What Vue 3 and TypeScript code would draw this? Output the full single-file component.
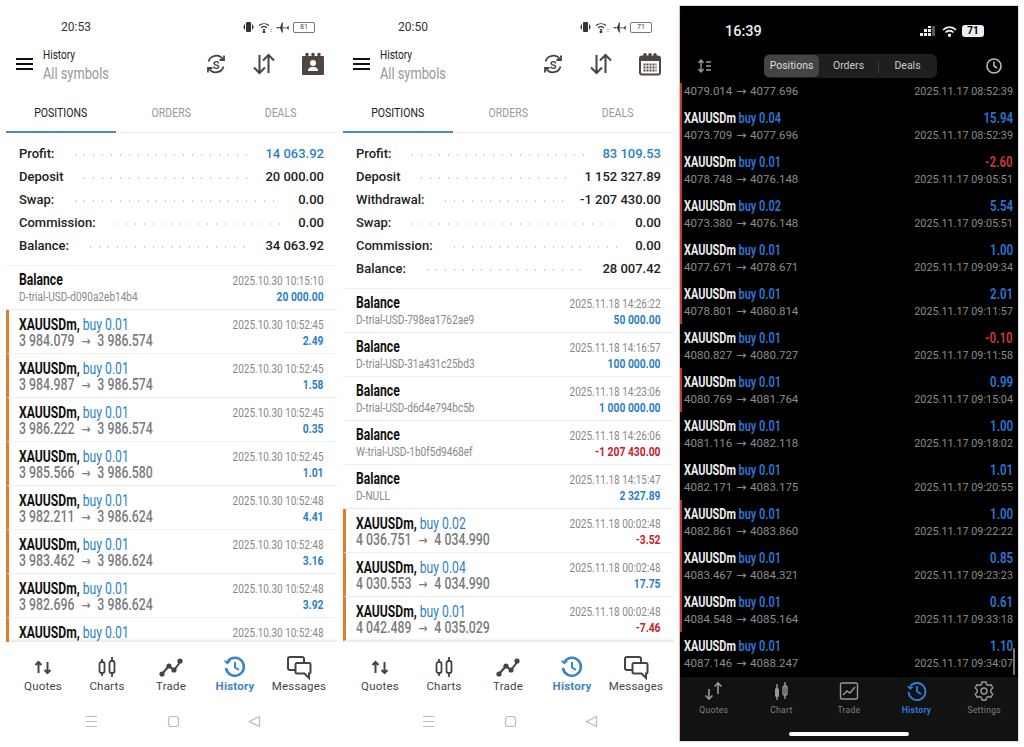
<template>
  <div class="page">
    <section v-for="p in phones" :key="p.time" class="phone">
      <div class="status">
        <span class="clock">{{ p.time }}</span>
        <div class="status-icons">
          <svg width="11" height="12" viewBox="0 0 11 12"><rect x="3" y="1" width="5" height="10" rx="1" fill="#333" /><path d="M1.5 3.5v5M9.5 3.5v5M0 5v2M11 5v2" stroke="#333" /></svg>
          <svg width="14" height="11" viewBox="0 0 14 11" fill="none" stroke="#333" stroke-width="1.2"><path d="M1 3.5a8 8 0 0 1 10 0M3 5.8a5 5 0 0 1 6 0M4.8 8a2.2 2.2 0 0 1 2.4 0" /><circle cx="6" cy="10" r=".8" fill="#333" /><path d="M13 7v.5M13 9v.5" /></svg>
          <svg width="13" height="11" viewBox="0 0 13 11"><path d="M0 5.5l2-.5 2 .5 2-5h1l-.5 5H11l1-1.5h1L12.500 5.500 13 7.500h-1L11 6.300H6.500L7 10.500H6L4 6 2 6.500z" fill="#333" /></svg>
          <span class="battery">{{ p.battery }}</span>
        </div>
      </div>

      <header class="toolbar">
        <div class="burger"><i></i><i></i><i></i></div>
        <div class="titles">
          <div class="title">History</div>
          <div class="subtitle">All symbols</div>
        </div>
        <div class="tools">
          <svg width="22" height="22" viewBox="0 0 22 22" fill="none" stroke="#444" stroke-width="1.800">
            <path d="M3.500 8.500A8 8 0 0 1 18 6.500M18.500 13.500A8 8 0 0 1 4 15.500" />
            <path d="M19 2.500v4.500h-4.500M3 19.500V15h4.500" />
            <text x="11" y="15.500" text-anchor="middle" class="dollar">S</text>
          </svg>
          <svg width="24" height="24" viewBox="0 0 24 24" fill="none" stroke="#444" stroke-width="2">
            <path d="M7.500 3v18M2 15.500l5.500 5.500 5.500-5.500M16.500 21V3M11 8.500L16.500 3 22 8.500" />
          </svg>
          <svg v-if="p.person" width="24" height="24" viewBox="0 0 24 24">
            <rect x="1" y="4" width="22" height="19" rx="1" fill="#50463f" />
            <circle cx="6" cy="2.500" r="1.800" fill="#50463f" /><circle cx="12" cy="2.500" r="1.800" fill="#50463f" /><circle cx="18" cy="2.500" r="1.800" fill="#50463f" />
            <circle cx="12" cy="11" r="3" fill="#fff" /><path d="M7 19c0-3 2-4 5-4s5 1 5 4z" fill="#fff" />
          </svg>
          <svg v-else width="24" height="24" viewBox="0 0 24 24">
            <rect x="2" y="4.500" width="20" height="18" rx="2" fill="none" stroke="#50463f" stroke-width="2" />
            <rect x="2" y="4" width="20" height="5" fill="#50463f" />
            <circle cx="7" cy="2.800" r="1.800" fill="#50463f" /><circle cx="12" cy="2.800" r="1.800" fill="#50463f" /><circle cx="17" cy="2.800" r="1.800" fill="#50463f" />
            <path d="M5.500 12.500h13M5.500 15.500h13M5.500 18.500h13" stroke="#50463f" stroke-width="1.800" stroke-dasharray="2 1" />
          </svg>
        </div>
      </header>

      <nav class="tabs">
        <div class="tab active"><span>POSITIONS</span></div>
        <div class="tab"><span>ORDERS</span></div>
        <div class="tab"><span>DEALS</span></div>
      </nav>

      <div class="summary">
        <div v-for="s in p.summary" :key="s.label" class="sum-row">
          <span>{{ s.label }}</span>
          <i class="leader"></i>
          <span :class="{ blue: s.blue }">{{ s.value }}</span>
        </div>
      </div>

      <div class="list">
        <div v-for="(b, i) in p.balances" :key="i" class="row">
          <div class="row-l">
            <div class="sym">Balance</div>
            <div class="acct">{{ b.acct }}</div>
          </div>
          <div class="row-r">
            <div class="date">{{ b.date }}</div>
            <div class="amt" :class="{ neg: b.amt.startsWith('-') }">{{ b.amt }}</div>
          </div>
        </div>
        <div v-for="(t, i) in p.trades" :key="i" class="row trade">
          <div class="row-l">
            <div class="sym">XAUUSDm, <em>buy {{ t.vol }}</em></div>
            <div class="prices">{{ t.open }} <small>→</small> {{ t.close }}</div>
          </div>
          <div class="row-r">
            <div class="date">{{ t.date }}</div>
            <div class="amt" :class="{ neg: t.amt.startsWith('-') }">{{ t.amt }}</div>
          </div>
        </div>
      </div>

      <footer class="bottom">
        <div v-for="n in lightNav" :key="n.label" class="nav-item" :class="{ on: n.label === 'History' }">
          <svg width="26" height="26" viewBox="0 0 26 26" fill="none" v-html="n.icon"></svg>
          <span>{{ n.label }}</span>
        </div>
      </footer>
      <div class="softkeys">
        <svg width="13" height="13" viewBox="0 0 13 13" stroke="#bbb" stroke-width="1.200"><path d="M1 1.500h11M1 6.500h11M1 11.500h11" /></svg>
        <svg width="13" height="13" viewBox="0 0 13 13" fill="none" stroke="#bbb" stroke-width="1.200"><rect x="1.500" y="1.500" width="10" height="10" rx="2.500" /></svg>
        <svg width="13" height="13" viewBox="0 0 13 13" fill="none" stroke="#bbb" stroke-width="1.200"><path d="M11.500 1.500v10L1.500 6.500z" /></svg>
      </div>
    </section>

    <section class="ios">
      <div class="ios-status">
        <span class="ios-clock">16:39</span>
        <div class="ios-icons">
          <svg width="17" height="11" viewBox="0 0 17 11" fill="#eee"><path d="M0 7h3v3H0zM4 7h3v3H4zM8 7h3v3H8zM4 3h3v3H4zM8 3h3v3H8zM8 0h3v2H8z" /><path d="M12 0h3v10h-3z" fill="#555" /></svg>
          <svg width="15" height="11" viewBox="0 0 15 11" fill="none" stroke="#eee" stroke-width="1.800"><path d="M1 4a9 9 0 0 1 13 0M3.500 6.500a5.500 5.500 0 0 1 8 0" /><circle cx="7.500" cy="9.200" r=".8" fill="#eee" /></svg>
          <span class="ios-batt">71</span>
        </div>
      </div>
      <div class="ios-bar">
        <svg width="15" height="14" viewBox="0 0 15 14" fill="none" stroke="#999" stroke-width="1.400"><path d="M4 1v12M1.500 4L4 1l2.500 3M1.500 10L4 13l2.500-3M9 3h5M9 7h5M9 11h5" /></svg>
        <div class="segments">
          <span class="seg on">Positions</span>
          <span class="seg">Orders</span>
          <i class="seg-line"></i>
          <span class="seg">Deals</span>
        </div>
        <svg width="18" height="18" viewBox="0 0 18 18" fill="none" stroke="#bbb" stroke-width="1.600"><circle cx="9" cy="9" r="7" /><path d="M9 4.500V9l3 2" /></svg>
      </div>
      <div class="ios-list">
        <div class="ios-sub first">
          <span>4079.014 <small>→</small> 4077.696</span><span class="ios-date">2025.11.17 08:52:39</span>
        </div>
        <div v-for="(d, i) in deals" :key="i" class="ios-row" :class="{ loss: d.mark }">
          <div class="ios-top">
            <span class="ios-sym">XAUUSDm <em>buy {{ d.vol }}</em></span>
            <span class="ios-amt" :class="{ neg: d.amt.startsWith('-') }">{{ d.amt }}</span>
          </div>
          <div class="ios-sub">
            <span>{{ d.open }} <small>→</small> {{ d.close }}</span><span class="ios-date">2025.11.17 {{ d.time }}</span>
          </div>
        </div>
        <i class="scroll-thumb"></i>
      </div>
      <footer class="ios-nav">
        <div v-for="n in darkNav" :key="n.label" class="ios-item" :class="{ on: n.label === 'History' }">
          <svg width="22" height="22" viewBox="0 0 22 22" fill="none" v-html="n.icon"></svg>
          <span>{{ n.label }}</span>
        </div>
      </footer>
      <div class="home"><i></i></div>
    </section>
  </div>
</template>

<script setup lang="ts">
const historyIcon = (c: string) => `<path d="M6 7a9 9 0 1 1-2 7" stroke="${c}" stroke-width="2.600"/><path d="M2.500 6.500l3.800 4 3.700-3.500z" fill="${c}" transform="translate(-1 0)"/><path d="M13 8v5.500l4 2.500" stroke="${c}" stroke-width="2"/>`

const lightNav = [
  { label: 'Quotes', icon: '<path d="M8.500 19V8M5.500 11l3-3 3 3M17.500 8v11M14.500 16l3 3 3-3" stroke="#444" stroke-width="2"/>' },
  { label: 'Charts', icon: '<rect x="5.500" y="8" width="5" height="11" rx="2" stroke="#444" stroke-width="1.800"/><rect x="15.500" y="7" width="5" height="12" rx="2" stroke="#444" stroke-width="1.800"/><path d="M8 8V5M8 19v3M18 7V3M18 19v4" stroke="#444" stroke-width="1.800"/>' },
  { label: 'Trade', icon: '<path d="M4 20l7-8 5 4 7-9" stroke="#444" stroke-width="2"/><circle cx="4" cy="20" r="2.600" fill="#444"/><circle cx="11" cy="12" r="2.600" fill="#444"/><circle cx="16" cy="16" r="2.600" fill="#444"/><circle cx="22" cy="7" r="2.600" fill="#444"/>' },
  { label: 'History', icon: historyIcon('#3d84c6') },
  { label: 'Messages', icon: '<path d="M18 9V5a2 2 0 0 0-2-2H4a2 2 0 0 0-2 2v9a2 2 0 0 0 2 2h5" stroke="#444" stroke-width="2"/><path d="M11 9h12a1.500 1.500 0 0 1 1.500 1.500V18a1.500 1.500 0 0 1-1.500 1.500V24l-4.500-4.500H11A1.500 1.500 0 0 1 9.500 18v-7.500A1.500 1.500 0 0 1 11 9z" stroke="#444" stroke-width="2"/>' },
]

const darkNav = [
  { label: 'Quotes', icon: '<path d="M6 19V9M2.500 15.500L6 19l3.500-3.500M15 14V3M11.500 6.500L15 3l3.500 3.500" stroke="#999" stroke-width="1.600"/>' },
  { label: 'Chart', icon: '<rect x="5" y="8" width="4" height="9" rx="1.500" fill="#999"/><rect x="13" y="6" width="4" height="9" rx="1.500" stroke="#999" stroke-width="1.400"/><path d="M7 4v16M15 2v17" stroke="#999" stroke-width="1.400"/>' },
  { label: 'Trade', icon: '<rect x="2.500" y="3" width="17" height="16" rx="1.500" stroke="#999" stroke-width="1.400"/><path d="M5 15l4-4 3 2 5-6" stroke="#999" stroke-width="1.400"/>' },
  { label: 'History', icon: '<path d="M4.500 6a8.500 8.500 0 1 1-2 6" stroke="#2f7fe0" stroke-width="1.800"/><path d="M1 6l3 4 3.500-3z" fill="#2f7fe0"/><path d="M11 6v5.500l4 2.500" stroke="#2f7fe0" stroke-width="1.800"/>' },
  { label: 'Settings', icon: '<circle cx="11" cy="11" r="3" stroke="#999" stroke-width="1.400"/><path d="M9 2h4l.6 2.500 1.800.9 2.400-.9 2 3.400-1.900 1.700v2.800l1.900 1.700-2 3.400-2.400-.9-1.800.9L13 20H9l-.6-2.500-1.800-.9-2.400.9-2-3.400 1.900-1.700V9.600L2.200 7.900l2-3.400 2.400.9 1.800-.9z" stroke="#999" stroke-width="1.400"/>' },
]

const t = (vol: string, open: string, close: string, date: string, amt: string) => ({ vol, open, close, date, amt })
const d1 = '2025.10.30 '
const d2 = '2025.11.18 '

const phones = [
  {
    time: '20:53',
    battery: '81',
    person: true,
    summary: [
      { label: 'Profit:', value: '14 063.92', blue: true },
      { label: 'Deposit', value: '20 000.00' },
      { label: 'Swap:', value: '0.00' },
      { label: 'Commission:', value: '0.00' },
      { label: 'Balance:', value: '34 063.92' },
    ],
    balances: [{ acct: 'D-trial-USD-d090a2eb14b4', date: d1 + '10:15:10', amt: '20 000.00' }],
    trades: [
      t('0.01', '3 984.079', '3 986.574', d1 + '10:52:45', '2.49'),
      t('0.01', '3 984.987', '3 986.574', d1 + '10:52:45', '1.58'),
      t('0.01', '3 986.222', '3 986.574', d1 + '10:52:45', '0.35'),
      t('0.01', '3 985.566', '3 986.580', d1 + '10:52:45', '1.01'),
      t('0.01', '3 982.211', '3 986.624', d1 + '10:52:48', '4.41'),
      t('0.01', '3 983.462', '3 986.624', d1 + '10:52:48', '3.16'),
      t('0.01', '3 982.696', '3 986.624', d1 + '10:52:48', '3.92'),
      t('0.01', '3 982.147', '3 986.624', d1 + '10:52:48', '4.47'),
    ],
  },
  {
    time: '20:50',
    battery: '71',
    person: false,
    summary: [
      { label: 'Profit:', value: '83 109.53', blue: true },
      { label: 'Deposit', value: '1 152 327.89' },
      { label: 'Withdrawal:', value: '-1 207 430.00' },
      { label: 'Swap:', value: '0.00' },
      { label: 'Commission:', value: '0.00' },
      { label: 'Balance:', value: '28 007.42' },
    ],
    balances: [
      { acct: 'D-trial-USD-798ea1762ae9', date: d2 + '14:26:22', amt: '50 000.00' },
      { acct: 'D-trial-USD-31a431c25bd3', date: d2 + '14:16:57', amt: '100 000.00' },
      { acct: 'D-trial-USD-d6d4e794bc5b', date: d2 + '14:23:06', amt: '1 000 000.00' },
      { acct: 'W-trial-USD-1b0f5d9468ef', date: d2 + '14:26:06', amt: '-1 207 430.00' },
      { acct: 'D-NULL', date: d2 + '14:15:47', amt: '2 327.89' },
    ],
    trades: [
      t('0.02', '4 036.751', '4 034.990', d2 + '00:02:48', '-3.52'),
      t('0.04', '4 030.553', '4 034.990', d2 + '00:02:48', '17.75'),
      t('0.01', '4 042.489', '4 035.029', d2 + '00:02:48', '-7.46'),
    ],
  },
]

const deals = [
  { vol: '0.04', amt: '15.94', open: '4073.709', close: '4077.696', time: '08:52:39', mark: true },
  { vol: '0.01', amt: '-2.60', open: '4078.748', close: '4076.148', time: '09:05:51', mark: true },
  { vol: '0.02', amt: '5.54', open: '4073.380', close: '4076.148', time: '09:05:51', mark: true },
  { vol: '0.01', amt: '1.00', open: '4077.671', close: '4078.671', time: '09:09:34', mark: true },
  { vol: '0.01', amt: '2.01', open: '4078.801', close: '4080.814', time: '09:11:57', mark: true },
  { vol: '0.01', amt: '-0.10', open: '4080.827', close: '4080.727', time: '09:11:58', mark: false },
  { vol: '0.01', amt: '0.99', open: '4080.769', close: '4081.764', time: '09:15:04', mark: true },
  { vol: '0.01', amt: '1.00', open: '4081.116', close: '4082.118', time: '09:18:02', mark: false },
  { vol: '0.01', amt: '1.01', open: '4082.171', close: '4083.175', time: '09:20:55', mark: false },
  { vol: '0.01', amt: '1.00', open: '4082.861', close: '4083.860', time: '09:22:22', mark: true },
  { vol: '0.01', amt: '0.85', open: '4083.467', close: '4084.321', time: '09:23:23', mark: true },
  { vol: '0.01', amt: '0.61', open: '4084.548', close: '4085.164', time: '09:33:18', mark: true },
  { vol: '0.01', amt: '1.10', open: '4087.146', close: '4088.247', time: '09:34:07', mark: false },
]
</script>

<style>
html, body { background: #fff; overflow: hidden; }
</style>

<style scoped>
.page {
  display: flex;
  width: 1024px;
  height: 747px;
  background: #fff;
  overflow: hidden;
  font-family: Roboto, "Liberation Sans", sans-serif;
}

.phone {
  width: 337px;
  height: 747px;
  padding-left: 6px;
  display: flex;
  flex-direction: column;
  flex: none;
  box-sizing: border-box;
}
.phone + .phone { width: 343px; }
.phone + .phone > * { margin-right: 6px; }

.status {
  height: 43px;
  padding: 19px 0 0 55px;
  box-sizing: border-box;
  display: flex;
  justify-content: space-between;
  color: #333;
}
.clock { font-size: 12px; line-height: 16px; }
.status-icons {
  display: flex;
  align-items: center;
  gap: 4px;
  height: 16px;
  padding-right: 22px;
}
.battery {
  width: 20px;
  height: 9px;
  border: 1px solid #777;
  border-radius: 2px;
  font-size: 7px;
  line-height: 9px;
  text-align: center;
  color: #444;
}

.toolbar {
  height: 42px;
  display: flex;
  align-items: center;
}
.burger {
  width: 17px;
  margin-left: 10px;
  display: flex;
  flex-direction: column;
  gap: 3px;
}
.burger i { height: 2px; background: #111; }
.titles { margin-left: 10px; padding-top: 4px; }
.title { font-size: 12px; line-height: 15px; color: #222; transform: scaleX(.84); transform-origin: left; }
.subtitle { font-size: 16px; line-height: 21px; color: #999; transform: scaleX(.8); transform-origin: left; }
.tools {
  margin-left: auto;
  display: flex;
  align-items: center;
  gap: 25px;
  padding-right: 12px;
}
.dollar { font: 600 11px Roboto, sans-serif; fill: #444; stroke: none; }

.tabs {
  height: 48px;
  display: flex;
  border-bottom: 1px solid #eee;
  box-sizing: border-box;
  margin-top: 0;
}
.tab {
  width: 110px;
  height: 48px;
  box-sizing: border-box;
  font-size: 13px;
  line-height: 56px;
  text-align: center;
  color: #999;
}
.tab span { display: inline-block; transform: scaleX(.81); }
.tab.active { color: #222; border-bottom: 2px solid #4a8ac8; }

.summary {
  padding: 9px 13px 8px;
  border-bottom: 1px solid #eee;
}
.sum-row {
  height: 23px;
  display: flex;
  align-items: center;
  font-size: 13px;
  font-weight: 500;
  color: #222;
}
.leader {
  flex: 1;
  height: 2px;
  margin: 3px 17px 0;
  background: radial-gradient(circle, #ccc 1px, transparent 1px) 0 0 / 9px 2px repeat-x;
}
.blue { color: #2d7fc4; }

.list {
  flex: 1;
  min-height: 0;
  overflow: hidden;
  box-shadow: inset 0 -6px 5px -5px #ddd;
}
.row {
  height: 44px;
  box-sizing: border-box;
  padding: 0 13px;
  display: flex;
  justify-content: space-between;
  align-items: center;
  border-bottom: 1px solid #eee;
}
.trade { border-left: 3px solid #e07c2c; padding-left: 10px; }
.sym { font-size: 16px; line-height: 19px; font-weight: 700; color: #111; transform: scaleX(.76); transform-origin: left; white-space: nowrap; }
.sym em { font-style: normal; font-weight: 400; color: #2d7fc4; }
.trade .sym { line-height: 17px; margin-top: 1px; }
.acct { font-size: 12px; line-height: 16px; color: #888; transform: scaleX(.84); transform-origin: left; white-space: nowrap; }
.prices { font-size: 16px; line-height: 15px; font-weight: 500; color: #7a7a7a; transform: scaleX(.77); transform-origin: left; white-space: nowrap; }
.prices small { font-family: "DejaVu Sans", sans-serif; font-size: 14px; font-weight: 400; margin: 0 5px; }
.row-r { text-align: right; margin-top: 2px; }
.date { font-size: 12px; line-height: 16px; color: #888; transform: scaleX(.83); transform-origin: right; white-space: nowrap; }
.amt { font-size: 12px; line-height: 16px; font-weight: 700; color: #2d7fc4; transform: scaleX(.86); transform-origin: right; }
.amt.neg { color: #c8202a; }

.bottom {
  height: 58px;
  padding: 0 6px 0 5px;
  display: flex;
  justify-content: space-between;
}
.nav-item {
  width: 64px;
  display: flex;
  flex-direction: column;
  align-items: center;
  padding-top: 12px;
  font-size: 11.500px;
  letter-spacing: .2px;
  line-height: 14px;
  color: #444;
}
.nav-item span { margin-top: -1px; }
.nav-item.on { color: #3d84c6; font-weight: 700; }
.softkeys {
  height: 47px;
  padding: 15px 76px 0 79px;
  box-sizing: border-box;
  display: flex;
  justify-content: space-between;
  align-items: flex-start;
}

.ios {
  width: 338px;
  height: 735px;
  margin-top: 6px;
  flex: none;
  background: #000;
  display: flex;
  flex-direction: column;
  overflow: hidden;
  color: #999;
  box-shadow: -1px 0 0 #efb9a6, 0 0 0 1px #ddd;
}
.ios-status {
  height: 38px;
  padding: 12px 34px 0 45px;
  box-sizing: border-box;
  display: flex;
  justify-content: space-between;
  align-items: center;
}
.ios-clock { font-size: 14.500px; font-weight: 500; color: #eee; }
.ios-icons { display: flex; align-items: center; gap: 5px; }
.ios-batt {
  width: 22px;
  height: 12px;
  border-radius: 3px;
  background: #eee;
  color: #000;
  font-size: 10px;
  font-weight: 700;
  line-height: 12px;
  text-align: center;
}
.ios-bar {
  height: 39px;
  padding: 5px 15px 0 17px;
  box-sizing: border-box;
  display: flex;
  justify-content: space-between;
  align-items: center;
}
.segments {
  display: flex;
  align-items: center;
  height: 24px;
  background: #1f1f1f;
  border-radius: 6px;
  margin-left: 14px;
  margin-right: 10px;
  font-size: 10.500px;
  color: #ccc;
}
.seg { width: 59px; text-align: center; line-height: 22px; }
.seg.on { width: 55px; background: #444; border-radius: 5px; color: #ddd; }
.seg-line { width: 1px; height: 13px; margin: 0 -1px 0 0; background: #3a3a3a; }
.ios-list {
  height: 594px;
  position: relative;
  overflow: hidden;
}
.ios-row {
  height: 44px;
  padding-top: 5px;
  box-sizing: border-box;
}
.ios-row.loss { box-shadow: inset 2px 0 0 #b93a36; }
.ios-top,
.ios-sub {
  display: flex;
  justify-content: space-between;
  padding: 0 5px 0 4px;
}
.ios-top { font-size: 14px; line-height: 18px; font-weight: 700; }
.ios-sym { color: #eee; transform: scaleX(.78); transform-origin: left; white-space: nowrap; }
.ios-sym em { font-style: normal; color: #2a70c8; }
.ios-amt { color: #2a70c8; transform: scaleX(.82); transform-origin: right; }
.ios-amt.neg { color: #c0392f; }
.ios-sub { font-size: 11.500px; line-height: 17px; color: #8c8c8c; }
.ios-sub small { font-family: "DejaVu Sans", sans-serif; font-size: 12px; margin: 0 1px; }
.ios-date { transform: scaleX(.94); transform-origin: right; }
.ios-sub.first { height: 21px; box-shadow: inset 2px 0 0 #b93a36; box-sizing: border-box; }
.scroll-thumb {
  position: absolute;
  right: 3px;
  bottom: 2px;
  width: 2px;
  height: 27px;
  border-radius: 1px;
  background: #777;
}
.ios-nav {
  height: 50px;
  background: #121212;
  display: flex;
}
.ios-item {
  flex: 1;
  padding-top: 3px;
  display: flex;
  flex-direction: column;
  align-items: center;
  font-size: 8.500px;
  letter-spacing: .3px;
  line-height: 12px;
  color: #808080;
}
.ios-item span { margin-top: 2px; }
.ios-item.on { color: #2f7fe0; font-weight: 600; }
.home {
  flex: 1;
  background: #121212;
  display: flex;
  justify-content: center;
  padding-top: 5px;
  box-sizing: border-box;
}
.home i { width: 120px; height: 4px; border-radius: 2px; background: #fff; }
</style>
